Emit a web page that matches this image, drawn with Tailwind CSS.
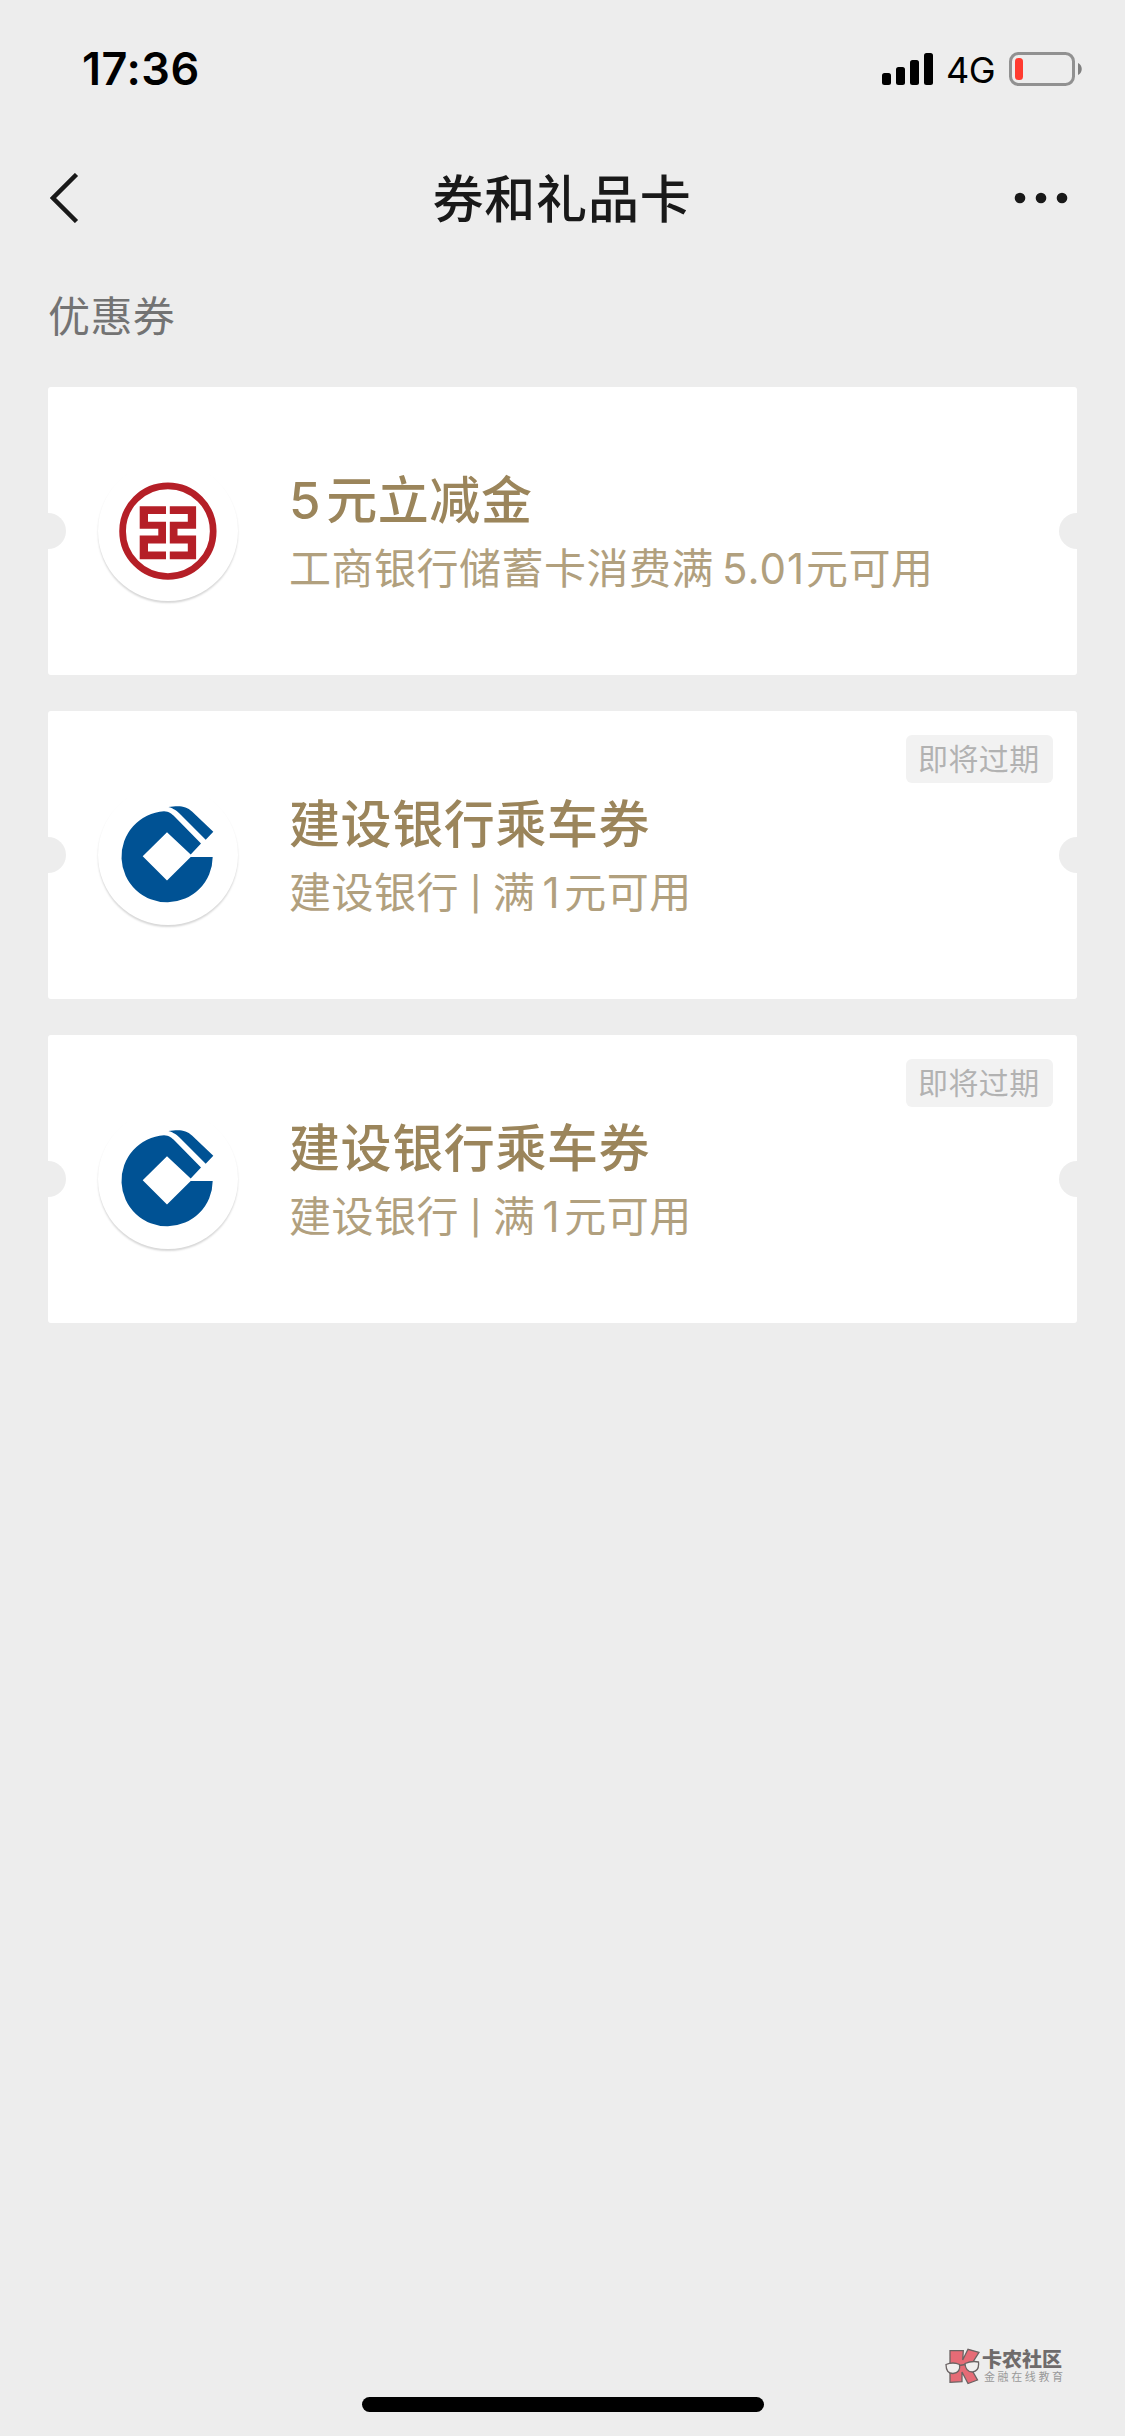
<!DOCTYPE html>
<html lang="zh-CN">

<head>
    <meta charset="UTF-8">
    <meta name="viewport" content="width=device-width, initial-scale=1.0">
    <script src="https://cdn.jsdelivr.net/npm/@tailwindcss/browser@4"></script>
    <title>券和礼品卡</title>
</head>

<body class="bg-[#ededed] w-[1125px] h-[2436px] overflow-hidden flex flex-col relative font-['Inter','Noto_Sans_CJK_SC',sans-serif]">

    <!-- barra de estado -->
    <div class="h-[132px] shrink-0 flex justify-between pl-[82px] pr-[43px] text-black">
        <div class="mt-[39px] text-[45px] leading-[60px] font-semibold tracking-[0.5px]">17:36</div>
        <div class="flex items-start">
            <svg class="mt-[53px] w-[51px] h-[32px]" viewBox="0 0 51 32">
                <rect x="0" y="20" width="9" height="12" rx="2.5" />
                <rect x="14" y="14" width="9" height="18" rx="2.5" />
                <rect x="28" y="7" width="9" height="25" rx="2.5" />
                <rect x="42" y="0" width="9" height="32" rx="2.5" />
            </svg>
            <span class="ml-[13px] mt-[45px] w-[49px] text-[36px] leading-[50px] tracking-[-0.5px]">4G</span>
            <svg class="ml-[14px] mt-[52px] w-[73px] h-[34px]" viewBox="0 0 73 34">
                <rect x="1.5" y="1.5" width="63" height="31" rx="8" fill="none" stroke="#919191" stroke-width="3" />
                <rect x="6" y="6" width="8" height="22" rx="3.5" fill="#ff3b30" />
                <path d="M69 11c5 2 5 10 0 12z" fill="#808080" />
            </svg>
        </div>
    </div>

    <!-- titulo -->
    <header class="h-[132px] shrink-0 flex items-center justify-between pl-[50px] pr-[57px] text-[#191919]">
        <svg class="w-[60px] h-[50px]" viewBox="0 0 60 50" fill="none" stroke="#191919" stroke-width="4.5">
            <path d="M26.500 1.500L3 25l23.500 23.500" />
        </svg>
        <h1 class="mt-[3px] text-[51px] leading-[60px] font-medium tracking-[0.8px]">券和礼品卡</h1>
        <svg class="w-[54px] h-[12px]" viewBox="0 0 54 12" fill="#191919">
            <circle cx="6" cy="6" r="5.300" />
            <circle cx="27" cy="6" r="5.300" />
            <circle cx="48" cy="6" r="5.300" />
        </svg>
    </header>

    <main class="px-12 flex flex-col">
        <h2 class="mt-[23px] mb-[40px] h-[60px] text-[42px] leading-[60px] tracking-[0.4px] text-[#737373]">优惠券</h2>

        <div class="flex flex-col gap-9">
            <section class="relative h-[288px] bg-white rounded-[3px] overflow-hidden flex items-center pl-[50px]">
                <i class="absolute -left-[18px] top-[126px] size-9 rounded-full bg-[#ededed]"></i>
                <i class="absolute -right-[18px] top-[126px] size-9 rounded-full bg-[#ededed]"></i>
                <div class="size-[140px] rounded-full shadow-[0_2px_2px_rgba(0,0,0,0.16)]">
                    <svg class="size-[140px]" viewBox="0 0 140 140">
                        <circle cx="69.900" cy="70.200" r="45.300" fill="none" stroke="#b51f27" stroke-width="6.700" />
                        <path fill="#b51f27" d="M41.700 45.200H68v7.800H50v7.800h18V82.500H50v8h18v7.700H41.700V74.500h18.600v-6.700H41.700z" />
                        <path fill="#b51f27" d="M98.100 45.200H71.800v7.800h18v7.800h-18V82.500h18v8h-18v7.700h26.300V74.500H79.500v-6.700h18.600z" />
                    </svg>
                </div>
                <div class="ml-[51px] mt-[8px]">
                    <p class="text-[51px] leading-[66px] font-medium tracking-[0.6px] text-[#9b855b]"><span class="mr-[5px]">5</span>元立减金</p>
                    <p class="mt-[2px] text-[42px] leading-[66px] tracking-[0.5px] text-[#b1a07e]">工商银行储蓄卡消费满<span class="ml-[8px] mr-[1px] tracking-[1px]">5.01</span>元可用</p>
                </div>
            </section>

            <section class="relative h-[288px] bg-white rounded-[3px] overflow-hidden flex items-center pl-[50px]">
                <i class="absolute -left-[18px] top-[126px] size-9 rounded-full bg-[#ededed]"></i>
                <i class="absolute -right-[18px] top-[126px] size-9 rounded-full bg-[#ededed]"></i>
                <span class="absolute right-6 top-6 w-[147px] h-12 rounded-[6px] bg-[#f2f2f2] pl-[12px] text-[30px] leading-[49px] tracking-[0.4px] text-[#b2b2b2]">即将过期</span>
                <div class="size-[140px] rounded-full shadow-[0_2px_2px_rgba(0,0,0,0.16)]">
                    <svg class="size-[140px]" viewBox="0 0 140 140" fill="#005294">
                        <path d="M66 26.200C71 26.200 74 29 76.500 31.500L103 58.500 92.700 69.500 69 47.200 44.700 71.200 69 95.500 92.700 72H114.700A45.600 45.600 0 1 1 66 26.200z" />
                        <path d="M70.300 22C82 20.500 88 21 94 26.500L115.300 46.700 107.700 54.700 83 30C79 26 76 23.500 70.300 22z" />
                    </svg>
                </div>
                <div class="ml-[51px] mt-[8px]">
                    <p class="text-[51px] leading-[66px] font-medium tracking-[0.6px] text-[#9b855b]">建设银行乘车券</p>
                    <p class="mt-[2px] text-[42px] leading-[66px] tracking-[0.5px] text-[#b1a07e]">建设银行<span class="inline-block w-[34px] text-center text-[33px] leading-[40px] font-medium align-[2px]">|</span>满<span class="ml-[7px] mr-[4px]">1</span>元可用</p>
                </div>
            </section>

            <section class="relative h-[288px] bg-white rounded-[3px] overflow-hidden flex items-center pl-[50px]">
                <i class="absolute -left-[18px] top-[126px] size-9 rounded-full bg-[#ededed]"></i>
                <i class="absolute -right-[18px] top-[126px] size-9 rounded-full bg-[#ededed]"></i>
                <span class="absolute right-6 top-6 w-[147px] h-12 rounded-[6px] bg-[#f2f2f2] pl-[12px] text-[30px] leading-[49px] tracking-[0.4px] text-[#b2b2b2]">即将过期</span>
                <div class="size-[140px] rounded-full shadow-[0_2px_2px_rgba(0,0,0,0.16)]">
                    <svg class="size-[140px]" viewBox="0 0 140 140" fill="#005294">
                        <path d="M66 26.200C71 26.200 74 29 76.500 31.500L103 58.500 92.700 69.500 69 47.200 44.700 71.200 69 95.500 92.700 72H114.700A45.600 45.600 0 1 1 66 26.200z" />
                        <path d="M70.300 22C82 20.500 88 21 94 26.500L115.300 46.700 107.700 54.700 83 30C79 26 76 23.500 70.300 22z" />
                    </svg>
                </div>
                <div class="ml-[51px] mt-[8px]">
                    <p class="text-[51px] leading-[66px] font-medium tracking-[0.6px] text-[#9b855b]">建设银行乘车券</p>
                    <p class="mt-[2px] text-[42px] leading-[66px] tracking-[0.5px] text-[#b1a07e]">建设银行<span class="inline-block w-[34px] text-center text-[33px] leading-[40px] font-medium align-[2px]">|</span>满<span class="ml-[7px] mr-[4px]">1</span>元可用</p>
                </div>
            </section>
        </div>
    </main>

    <!-- marca de agua -->
    <div class="absolute left-[945px] top-[2348px] flex">
        <svg class="w-[35px] h-[37px]" viewBox="0 0 35 37" stroke="#6b6363" stroke-width="1.300">
            <path d="M5 2.700h13.300L17.700 12 23 1.300l11 3-9 14.400L32.500 32 23 35.500 17 24v9.700l-12 .6z" fill="#e66b76" />
            <path d="M1 16.500q7-3 13.500 0 1.500 8-6.500 9-7 0-7-9z" fill="#f0eeee" />
            <path d="M20 15.500q7-3 13.500-1.500 1 9-6 10-7 0-7.500-8.500zM14.500 17.500l5.500-1" fill="#f0eeee" />
        </svg>
        <div class="ml-[2px] mt-[1px] text-[#6f6b6b]">
            <p class="text-[20px] leading-[22px] font-black">卡农社区</p>
            <p class="ml-[2px] text-[11px] leading-[13px] tracking-[2.600px] text-[#999]">金融在线教育</p>
        </div>
    </div>

    <div class="absolute left-[362px] bottom-6 w-[402px] h-[15px] rounded-full bg-black"></div>

</body>

</html>
